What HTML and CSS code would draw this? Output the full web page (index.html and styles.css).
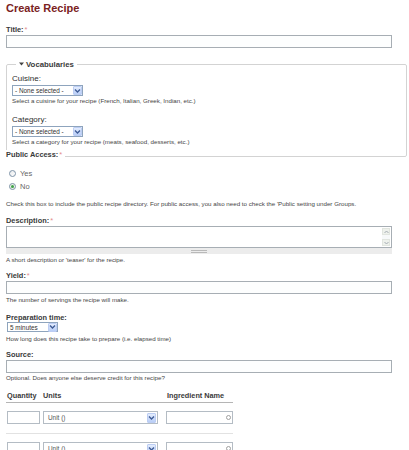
FILE: index.html
```html
<!DOCTYPE html>
<html lang="en">
<head>
<meta charset="utf-8">
<title>Create Recipe</title>
<link rel="stylesheet" href="styles.css">
</head>
<body>
<div class="page">
  <h1 class="title">Create Recipe</h1>

  <div class="item item-title">
    <label class="lbl">Title:<span class="req">*</span></label>
    <input class="text-input" type="text">
  </div>

  <fieldset class="vocab">
    <legend class="vocab-legend"><svg class="tri" width="5" height="4" viewBox="0 0 5 4"><path d="M0 0.5 L5 0.5 L2.5 3.5 Z" fill="#444"/></svg>Vocabularies</legend>
    <div class="vitem">
      <div class="vlbl">Cuisine:</div>
      <div class="select sel-none">
        <span class="sel-text">- None selected -</span>
        <span class="sel-btn"><svg width="7" height="6" viewBox="0 0 7 6"><polyline points="1,1.5 3.5,4 6,1.5" fill="none" stroke="#3f5c96" stroke-width="1.4"/></svg></span>
      </div>
      <div class="help help-v">Select a cuisine for your recipe (French, Italian, Greek, Indian, etc.)</div>
    </div>
    <div class="vitem vitem-2">
      <div class="vlbl">Category:</div>
      <div class="select sel-none">
        <span class="sel-text">- None selected -</span>
        <span class="sel-btn"><svg width="7" height="6" viewBox="0 0 7 6"><polyline points="1,1.5 3.5,4 6,1.5" fill="none" stroke="#3f5c96" stroke-width="1.4"/></svg></span>
      </div>
      <div class="help help-v">Select a category for your recipe (meats, seafood, desserts, etc.)</div>
    </div>
  </fieldset>

  <div class="item item-public">
    <label class="lbl lbl-over">Public Access:<span class="req">*</span></label>
    <div class="radio radio-first"><span class="radio-dot"></span><span class="radio-text">Yes</span></div>
    <div class="radio"><span class="radio-dot checked"></span><span class="radio-text">No</span></div>
    <div class="help help-public">Check this box to include the public recipe directory. For public access, you also need to check the 'Public setting under Groups.</div>
  </div>

  <div class="item item-desc">
    <label class="lbl">Description:<span class="req">*</span></label>
    <div class="textarea">
      <div class="textarea-body"></div>
      <div class="scrollbar">
        <span class="sb-btn"><svg width="5" height="4" viewBox="0 0 5 4"><polyline points="0.5,3 2.5,1 4.5,3" fill="none" stroke="#a3aab2" stroke-width="1"/></svg></span>
        <span class="sb-btn"><svg width="5" height="4" viewBox="0 0 5 4"><polyline points="0.5,1 2.5,3 4.5,1" fill="none" stroke="#a3aab2" stroke-width="1"/></svg></span>
      </div>
    </div>
    <div class="grippie"><span class="grip"></span></div>
    <div class="help help-after">A short description or 'teaser' for the recipe.</div>
  </div>

  <div class="item item-yield">
    <label class="lbl">Yield:<span class="req">*</span></label>
    <input class="text-input" type="text">
    <div class="help help-after">The number of servings the recipe will make.</div>
  </div>

  <div class="item item-prep">
    <label class="lbl">Preparation time:</label>
    <div class="select sel-prep">
      <span class="sel-text">5 minutes</span>
      <span class="sel-btn"><svg width="7" height="6" viewBox="0 0 7 6"><polyline points="1,1.5 3.5,4 6,1.5" fill="none" stroke="#3f5c96" stroke-width="1.4"/></svg></span>
    </div>
    <div class="help help-prep">How long does this recipe take to prepare (i.e. elapsed time)</div>
  </div>

  <div class="item item-source">
    <label class="lbl">Source:</label>
    <input class="text-input" type="text">
    <div class="help help-after">Optional. Does anyone else deserve credit for this recipe?</div>
  </div>

  <div class="ingredients">
    <div class="ing-row ing-head">
      <div class="th th-qty">Quantity</div>
      <div class="th">Units</div>
      <div class="th th-name">Ingredient Name</div>
    </div>
    <div class="ing-row">
      <div><input class="qty-input" type="text"></div>
      <div class="select sel-unit">
        <span class="sel-text">Unit ()</span>
        <span class="sel-btn"><svg width="7" height="6" viewBox="0 0 7 6"><polyline points="1,1.5 3.5,4 6,1.5" fill="none" stroke="#3f5c96" stroke-width="1.4"/></svg></span>
      </div>
      <div class="name-input"><span class="throbber"></span></div>
    </div>
    <div class="ing-row">
      <div><input class="qty-input" type="text"></div>
      <div class="select sel-unit">
        <span class="sel-text">Unit ()</span>
        <span class="sel-btn"><svg width="7" height="6" viewBox="0 0 7 6"><polyline points="1,1.5 3.5,4 6,1.5" fill="none" stroke="#3f5c96" stroke-width="1.4"/></svg></span>
      </div>
      <div class="name-input"><span class="throbber"></span></div>
    </div>
  </div>
</div>
</body>
</html>
```

FILE: styles.css
```css
* { box-sizing: border-box; }
html, body { margin: 0; padding: 0; background: #fff; }
body {
  font-family: "Liberation Sans", Arial, sans-serif;
  color: #333;
  overflow: hidden;
}
.page { padding: 2px 0 0 6px; }

.title {
  margin: 0;
  font-size: 11px;
  line-height: 13px;
  font-weight: bold;
  color: #7a2222;
}

.item { margin-top: 9px; }
.item-title { margin-top: 10px; }

.lbl {
  display: block;
  font-size: 7.4px;
  line-height: 9px;
  font-weight: bold;
  color: #3a3a3a;
}
.req { color: #e38b8b; font-weight: normal; margin-left: 1px; }

.text-input {
  display: block;
  width: 386px;
  height: 13px;
  margin: 1px 0 0 0;
  padding: 0;
  border: 1px solid #a7aeb4;
  background: #fdfefe;
  outline: none;
}

.help {
  font-size: 6.2px;
  line-height: 7px;
  color: #454545;
  white-space: nowrap;
}
.help-after { margin-top: 2px; }

/* Vocabularies fieldset */
.vocab {
  margin: 12px 2px 0 0;
  padding: 5px 6px 11px 5px;
  border: 1px solid #d3d3d3;
  border-radius: 2px;
  min-width: 0;
}
.vocab-legend {
  margin-left: 4px;
  padding: 0 3px;
  font-size: 7.8px;
  line-height: 9px;
  font-weight: bold;
  color: #3a3a3a;
}
.tri { margin-right: 2px; vertical-align: 1px; }
.vitem-2 { margin-top: 11px; }
.vlbl {
  font-size: 8px;
  line-height: 10px;
  color: #2e2e2e;
}
.help-v { margin-top: 1px; }

/* selects */
.select {
  display: flex;
  align-items: center;
  height: 11px;
  border: 1px solid #8ea4bd;
  background: #fff;
}
.sel-none { width: 71px; margin-top: 1px; }
.sel-prep { width: 51px; height: 10px; margin-left: 1px; }
.sel-unit { width: 115px; height: 13px; border-color: #b4bcc4; }
.sel-text {
  flex: 1;
  font-size: 6.4px;
  line-height: 9px;
  padding-left: 2px;
  color: #333;
  white-space: nowrap;
  overflow: hidden;
}
.sel-unit .sel-text { padding-left: 4px; color: #555; }
.sel-btn {
  flex: none;
  width: 9px;
  height: 9px;
  display: flex;
  align-items: center;
  justify-content: center;
  border: 1px solid #bccdf3;
  border-radius: 1px;
  background: linear-gradient(#e3ecfd, #b9cef7);
}
.sel-unit .sel-btn { margin-right: 1px; height: 10px; }

/* public access */
.item-public { margin-top: -7px; }
.lbl-over {
  width: fit-content;
  background: #fff;
  padding-right: 3px;
}
.radio {
  display: flex;
  align-items: center;
  height: 13px;
  padding-left: 3px;
}
.radio-first { margin-top: 8px; }
.radio-dot {
  width: 7px;
  height: 7px;
  border-radius: 50%;
  border: 1px solid #7e93a8;
  background: linear-gradient(135deg, #e6e9ec, #fff);
  display: flex;
  align-items: center;
  justify-content: center;
}
.radio-dot.checked { background: #eaf3e6; }
.radio-dot.checked::after {
  content: "";
  width: 3px;
  height: 3px;
  border-radius: 50%;
  background: #3fa04a;
}
.radio-text {
  margin-left: 4px;
  font-size: 7.5px;
  line-height: 9px;
  color: #666;
}
.help-public { margin-top: 7px; }

/* textarea */
.textarea {
  display: flex;
  width: 386px;
  height: 22px;
  margin-top: 1px;
  border: 1px solid #a7aeb4;
  background: #fff;
}
.textarea-body { flex: 1; }
.scrollbar {
  flex: none;
  width: 8px;
  margin: 1px 1px 1px 0;
  display: flex;
  flex-direction: column;
  justify-content: space-between;
  background: #f7f9fa;
}
.sb-btn {
  height: 7px;
  display: flex;
  align-items: center;
  justify-content: center;
  background: #eef1ec;
  border: 1px solid #e1e5df;
}
.grippie {
  width: 386px;
  height: 6px;
  background: #ececec;
  display: flex;
  align-items: center;
  justify-content: center;
}
.grip {
  width: 16px;
  height: 3px;
  border-top: 1px solid #b9b9b9;
  border-bottom: 1px solid #b9b9b9;
}

.item-yield { margin-top: 8px; }
.item-prep { margin-top: 10px; }
.help-prep { margin-top: 3px; }
.item-source { margin-top: 8px; }
.item-source .help-after { margin-top: 1px; }

/* ingredients table */
.ingredients { margin-top: 10px; width: 227px; }
.ing-row {
  display: grid;
  grid-template-columns: 37px 123px 67px;
  align-items: center;
  padding: 8px 0 9px;
  border-bottom: 1px solid #e2e2e2;
}
.ing-head {
  padding: 0 0 2px;
  border-bottom: 1px solid #b5b5b5;
}
.th {
  font-size: 7.3px;
  line-height: 9px;
  font-weight: bold;
  color: #3a3a3a;
}
.th-qty { padding-left: 1px; }
.th-name { padding-left: 1px; }
.qty-input {
  display: block;
  width: 33px;
  height: 13px;
  margin: 0 0 0 1px;
  padding: 0;
  border: 1px solid #b4bcc4;
  background: #fff;
}
.name-input {
  width: 67px;
  height: 13px;
  border: 1px solid #b4bcc4;
  display: flex;
  align-items: center;
  justify-content: flex-end;
  padding-right: 1px;
}
.throbber {
  width: 5px;
  height: 5px;
  border-radius: 50%;
  border: 1px solid #a0a0a0;
}
```
